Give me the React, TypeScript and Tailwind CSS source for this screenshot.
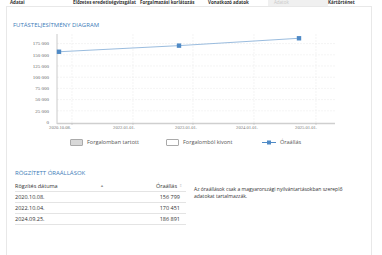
const tabs = [
  { label: "Adatai", w: "w-[63px]" },
  { label: "Előzetes eredetiségvizsgálat", w: "w-[67px]" },
  { label: "Forgalmazási korlátozás", w: "w-[68px]" },
  { label: "Vonatkozó adatok", w: "w-[60px]" },
  { label: "Adatok", w: "w-[60px]", active: true },
  { label: "Kártörténet", w: "w-[44px]" },
];

const yTicks = [0, 25000, 50000, 75000, 100000, 125000, 150000, 175000];
const xGrid = [65, 126, 186, 247, 309];
const xLabels = [
  { x: 53, t: "2020.10.08." },
  { x: 117, t: "2022.01.01." },
  { x: 179, t: "2023.01.01." },
  { x: 240, t: "2024.01.01." },
  { x: 299, t: "2025.01.01." },
];
const points = [
  { x: 52, v: 156799 },
  { x: 172, v: 170451 },
  { x: 292, v: 186891 },
];
const rows = [
  { d: "2020.10.08.", v: "156 799" },
  { d: "2022.10.04.", v: "170 451" },
  { d: "2024.09.25.", v: "186 891" },
];

const yOf = (v: number) => 93 - (v / 25000) * 11.2;
const fmt = (v: number) => (v === 0 ? "0" : `${Math.round(v / 1000)} 000`);

function Chart() {
  return (
    <svg width="366" height="102" className="block">
      {yTicks.slice(1).map((v) => (
        <line key={v} x1="50" x2="328" y1={yOf(v)} y2={yOf(v)} stroke="#ececec" strokeWidth="0.6" strokeDasharray="2 1" />
      ))}
      {xGrid.map((x) => (
        <line key={x} x1={x} x2={x} y1="5" y2="94" stroke="#ececec" strokeWidth="0.6" strokeDasharray="2 1" />
      ))}
      <line x1="50" x2="50" y1="5" y2="95" stroke="#bdbdbd" strokeWidth="0.8" />
      <line x1="50" x2="328" y1="94.5" y2="94.5" stroke="#cfcfcf" strokeWidth="1.4" />
      {yTicks.map((v) => (
        <text key={v} x="42" y={yOf(v) + 1.7} textAnchor="end" fontSize="5" fill="#666" fontFamily="'Liberation Serif', serif">
          {fmt(v)}
        </text>
      ))}
      {xGrid.map((x) => (
        <line key={`t${x}`} x1={x} x2={x} y1="94" y2="96" stroke="#bdbdbd" strokeWidth="0.6" />
      ))}
      {xLabels.map((l) => (
        <text key={l.t} x={l.x} y="100" textAnchor="middle" fontSize="4.6" fill="#777" fontFamily="'Liberation Serif', serif">
          {l.t}
        </text>
      ))}
      <polyline
        points={points.map((p) => `${p.x},${yOf(p.v)}`).join(" ")}
        fill="none"
        stroke="#8fb4da"
        strokeWidth="0.9"
      />
      {points.map((p) => (
        <rect key={p.x} x={p.x - 2.2} y={yOf(p.v) - 2.2} width="4.4" height="4.4" fill="#4f8ac6" />
      ))}
    </svg>
  );
}

export default function App() {
  return (
    <div className="h-[255px] w-[382px] overflow-hidden bg-white font-['Open_Sans','Liberation_Sans',sans-serif] text-[#333]">
      <div className="-mt-[2px] flex h-[9px] items-start pl-[10px] text-[4.5px] font-bold leading-[8px]">
        {tabs.map((t) => (
          <div
            key={t.label}
            className={`${t.w} shrink-0 whitespace-nowrap ${t.active ? "bg-[#f0f0f0] pl-[6px] font-normal text-[#c8c8c8]" : ""}`}
          >
            {t.label}
          </div>
        ))}
      </div>

      <div className="-mt-[1px] ml-[6px] h-[260px] w-[366px] border border-[#e8e8e8] bg-white">
        <div className="pl-[6px] pt-[14px] text-[6px] leading-[8px] text-[#3d7cb8]">FUTÁSTELJESÍTMÉNY DIAGRAM</div>
        <Chart />
        <div className="mt-[5px] flex h-[12px] items-center text-[5.5px] text-[#555]">
          <div className="ml-[63px] flex w-[96px] items-center gap-[4px]">
            <span className="h-[7px] w-[13px] rounded-[1px] border border-[#aaa] bg-[#d8d8d8]" />
            Forgalomban tartott
          </div>
          <div className="flex w-[96px] items-center gap-[4px]">
            <span className="h-[7px] w-[13px] rounded-[1px] border border-[#aaa] bg-white" />
            Forgalomból kivont
          </div>
          <div className="flex items-center gap-[4px]">
            <svg width="14" height="7">
              <line x1="0" x2="14" y1="3.5" y2="3.5" stroke="#4f8ac6" strokeWidth="1" />
              <rect x="5" y="1.5" width="4" height="4" fill="#4f8ac6" />
            </svg>
            Óraállás
          </div>
        </div>

        <div className="mt-[21px] pl-[8px] text-[6px] leading-[8px] text-[#3d7cb8]">RÖGZÍTETT ÓRAÁLLÁSOK</div>
        <div className="mt-[4px] flex">
          <div className="ml-[8px] w-[171px] text-[5.5px]">
            <div className="flex h-[11px] items-center border-b border-[#e4e4e4]">
              <span className="flex-1">Rögzítés dátuma</span>
              <span className="mr-[52px] text-[4px] text-[#999]">▲</span>
              <span>Óraállás</span>
              <span className="ml-[2px] mr-[4px] text-[4px] text-[#ccc]">⇕</span>
            </div>
            {rows.map((r) => (
              <div key={r.d} className="flex h-[11px] items-center border-b border-[#e4e4e4]">
                <span className="flex-1">{r.d}</span>
                <span className="mr-[6px]">{r.v}</span>
              </div>
            ))}
          </div>
          <p className="ml-[8px] mt-[5px] w-[170px] text-[5px] leading-[7px]">
            Az óraállások csak a magyarországi nyilvántartásokban szereplő adatokat tartalmazzák.
          </p>
        </div>
      </div>
    </div>
  );
}
